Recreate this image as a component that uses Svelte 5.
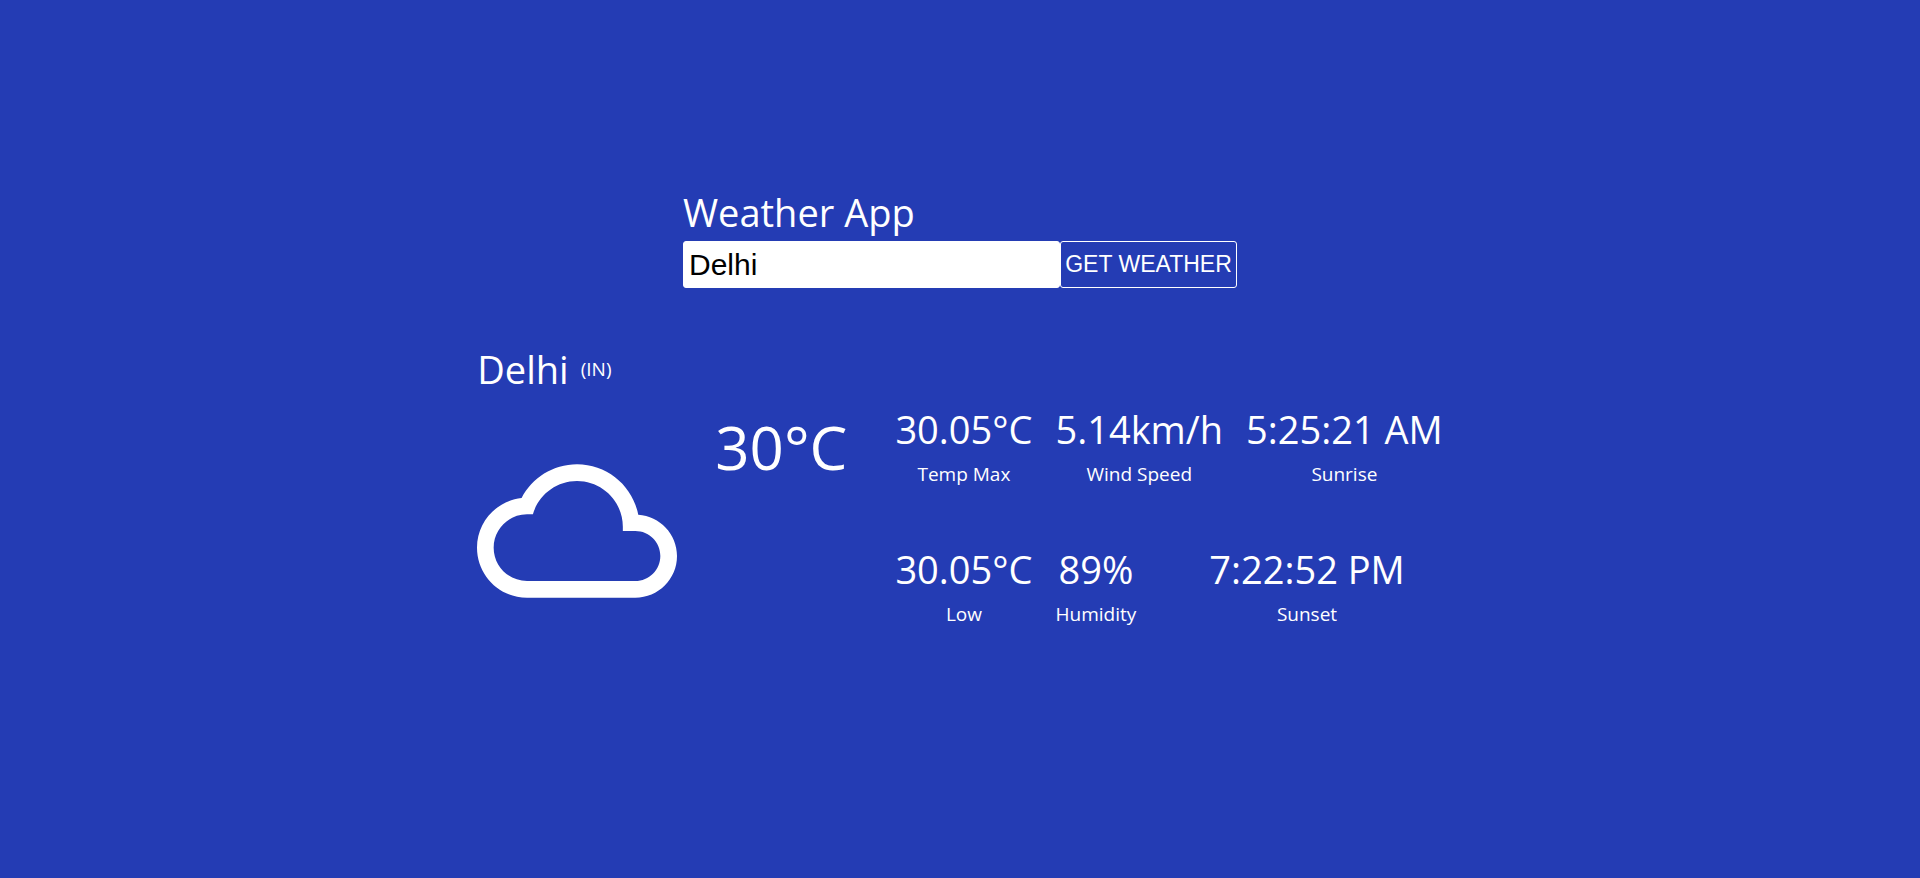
<script>
  let query = $state('Delhi');

  const rows = [
    [
      { value: '30.05°C', label: 'Temp Max' },
      { value: '5.14km/h', label: 'Wind Speed' },
      { value: '5:25:21 AM', label: 'Sunrise' }
    ],
    [
      { value: '30.05°C', label: 'Low' },
      { value: '89%', label: 'Humidity' },
      { value: '7:22:52 PM', label: 'Sunset', spaced: true }
    ]
  ];
</script>

<main>
  <form class="search" onsubmit={(event) => event.preventDefault()}>
    <label class="title" for="city">Weather App</label>
    <div class="controls">
      <input id="city" type="text" autocomplete="off" bind:value={query} />
      <button type="submit">GET WEATHER</button>
    </div>
  </form>

  <section class="weather">
    <header class="place">
      <span class="title">Delhi</span>
      <span class="small">(IN)</span>
    </header>
    <div class="report">
      <svg class="cloud" viewBox="0 0 24 24" aria-hidden="true">
        <path
          fill="currentColor"
          d="M19.35 10.04C18.67 6.59 15.64 4 12 4 9.11 4 6.6 5.64 5.35 8.04 2.34 8.36 0 10.91 0 14c0 3.31 2.69 6 6 6h13c2.76 0 5-2.24 5-5 0-2.64-2.05-4.78-4.65-4.96zM19 18H6c-2.21 0-4-1.79-4-4s1.79-4 4-4h.71C7.37 7.69 9.48 6 12 6c3.04 0 5.5 2.46 5.5 5.5v.5H19c1.66 0 3 1.34 3 3s-1.34 3-3 3z"
        />
      </svg>
      <div class="temperature">30°C</div>
      <div class="metrics">
        {#each rows as row}
          <div class="row">
            {#each row as item}
              <div class="metric" class:spaced={item.spaced}>
                <span class="title">{item.value}</span>
                <span class="small">{item.label}</span>
              </div>
            {/each}
          </div>
        {/each}
      </div>
    </div>
  </section>
</main>

<style>
  :global(body) {
    margin: 0;
    background: #243cb4;
  }

  main {
    box-sizing: border-box;
    min-height: 100vh;
    padding: 186px 24px 48px;
    display: flex;
    flex-direction: column;
    align-items: center;
    gap: 55px;
    color: #fff;
    font-family: 'Open Sans', 'Noto Sans', sans-serif;
  }

  .title {
    font-size: 38px;
    line-height: 52px;
    white-space: nowrap;
  }

  .small {
    font-size: 19px;
    line-height: 26px;
    white-space: nowrap;
  }

  .search {
    display: flex;
    flex-direction: column;
    gap: 3px;
  }

  .controls {
    display: flex;
    height: 47px;
  }

  input,
  button {
    box-sizing: border-box;
    margin: 0;
    border: 1px solid #fff;
    border-radius: 3px;
    font-family: 'Liberation Sans', Arial, sans-serif;
  }

  input {
    width: 377px;
    min-width: 0;
    padding: 0 5px;
    background: #fff;
    color: #000;
    font-size: 30px;
  }

  button {
    width: 177px;
    padding: 0;
    background: transparent;
    color: #fff;
    font-size: 23px;
    white-space: nowrap;
  }

  .place {
    display: flex;
    align-items: center;
    gap: 12px;
  }

  .report {
    display: flex;
    align-items: flex-start;
    gap: 38px;
    padding-top: 8px;
  }

  .cloud {
    width: 200px;
    height: 200px;
    margin-top: 28px;
  }

  .temperature {
    margin-top: 2px;
    font-size: 60px;
    line-height: 84px;
    white-space: nowrap;
  }

  .metrics {
    display: flex;
    flex-direction: column;
    gap: 56px;
    margin-left: 10px;
  }

  .row {
    display: flex;
    gap: 23px;
  }

  .metric {
    display: flex;
    flex-direction: column;
    align-items: center;
    gap: 6px;
  }

  .spaced {
    margin-left: 50px;
  }
</style>
